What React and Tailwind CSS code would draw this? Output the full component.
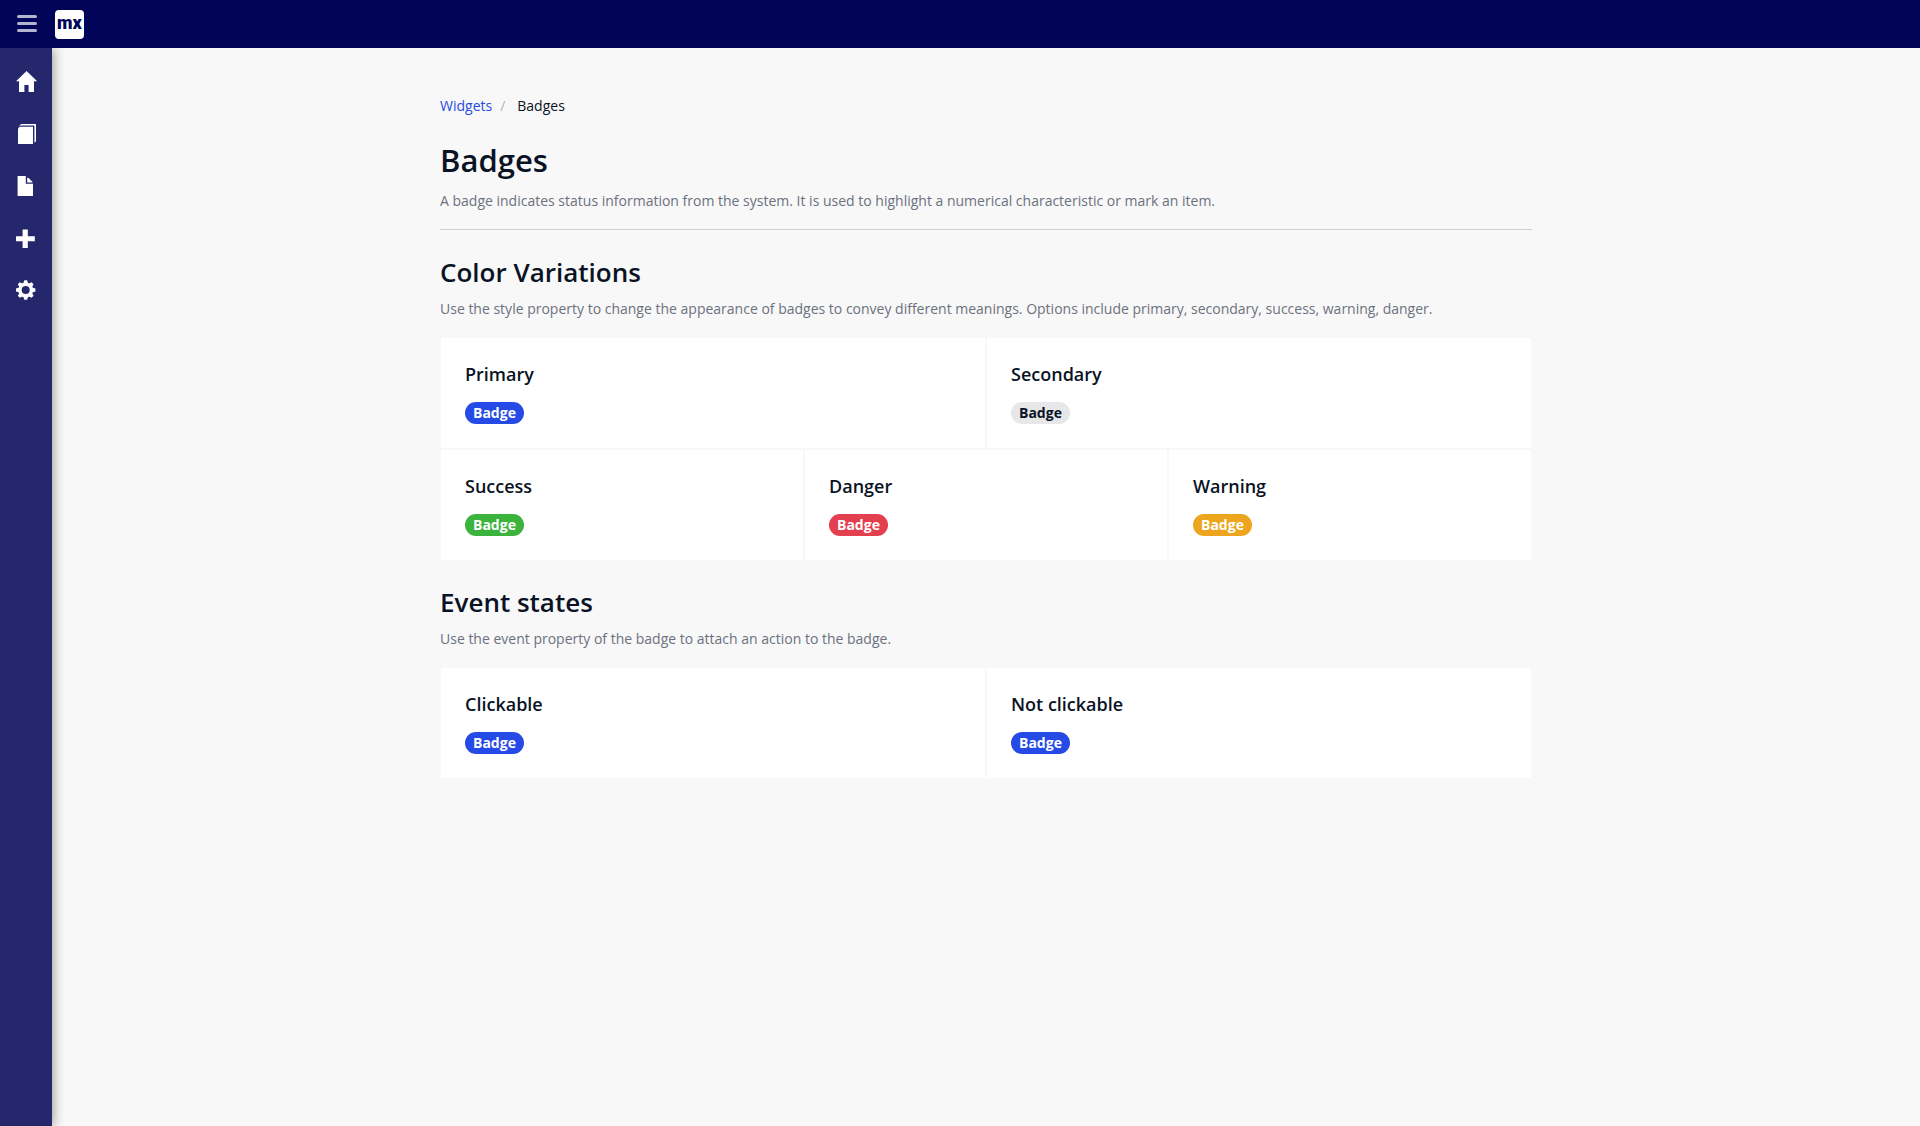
import React from "react";

const fontStack = "font-['Open_Sans','Noto_Sans',sans-serif]";

const HomeIcon = () => (
  <svg viewBox="0 0 24 24" className="size-6" fill="currentColor" aria-hidden="true">
    <path d="M12.6 1 2 11.2h3V22h5.4v-7h4.2v7H20V11.2h3.2z" />
  </svg>
);

const CopyIcon = () => (
  <svg viewBox="0 0 24 24" className="size-6" fill="currentColor" aria-hidden="true">
    <path d="M4 6.4 5.6 4.8H19V22H4z" />
    <path d="M4.8 4.4 7 2h15v17.2l-1.6 1.6V3.6H6.4z" />
  </svg>
);

const FileIcon = () => (
  <svg viewBox="0 0 24 24" className="size-6" fill="currentColor" aria-hidden="true">
    <path d="M3.6 2h8.2v7.8H19V22H3.6z" />
    <path d="M13.2 3.8h1.2l4 4v.8h-5.2z" />
  </svg>
);

const PlusIcon = () => (
  <svg viewBox="0 0 24 24" className="size-6" fill="currentColor" aria-hidden="true">
    <path d="M8.6 3.6h5.2v6.6h7v5h-7V22H8.6v-6.8H2v-5h6.6z" />
  </svg>
);

const CogIcon = () => (
  <svg viewBox="0 0 24 24" className="size-6" aria-hidden="true">
    <g transform="translate(11.7 12)" fill="currentColor">
      <circle r="5.7" fill="none" stroke="currentColor" strokeWidth="3.4" />
      {[0, 45, 90, 135, 180, 225, 270, 315].map((a) => (
        <path key={a} transform={`rotate(${a})`} d="M-2.4-6.4-1.4-9.7h2.8l1 3.3z" />
      ))}
    </g>
  </svg>
);

const navItems = [
  { label: "Home", Icon: HomeIcon },
  { label: "Templates", Icon: CopyIcon },
  { label: "Pages", Icon: FileIcon },
  { label: "Widgets", Icon: PlusIcon },
  { label: "Settings", Icon: CogIcon },
];

const tones = {
  primary: "bg-[#264ae5] text-white",
  secondary: "bg-[#e7e7e9] text-[#0a1325]",
  success: "bg-[#3cb33d] text-white",
  danger: "bg-[#e33f4e] text-white",
  warning: "bg-[#eca51c] text-white",
};

function Badge({ tone = "primary", clickable = false }) {
  const cls = `block w-fit rounded-[11px] px-2 text-sm leading-[22px] font-bold ${tones[tone]}`;
  return clickable ? (
    <button type="button" className={`${cls} cursor-pointer`}>Badge</button>
  ) : (
    <span className={cls}>Badge</span>
  );
}

function Card({ title, tone, clickable }) {
  return (
    <div className="flex-1 border border-[#f8f8f8] bg-white p-6">
      <h3 className="mb-4 text-lg leading-6 font-semibold">{title}</h3>
      <Badge tone={tone} clickable={clickable} />
    </div>
  );
}

function Section({ title, text, children }) {
  return (
    <section>
      <h2 className="text-[26px] leading-9 font-semibold">{title}</h2>
      <p className="mt-[7px] mb-4 text-sm leading-6 text-[#6c717e]">{text}</p>
      {children}
    </section>
  );
}

export default function App() {
  return (
    <div className={`flex min-h-screen flex-col bg-[#f8f8f8] text-[#0a1325] ${fontStack}`}>
      <header className="z-10 flex h-12 items-center gap-[18px] bg-[#020557] pl-[17px]">
        <button type="button" aria-label="Toggle menu" className="flex w-5 flex-col gap-1 pb-0.5">
          <span className="h-[3px] rounded-full bg-[#b3b4cd]" />
          <span className="h-[3px] rounded-full bg-[#b3b4cd]" />
          <span className="h-[3px] rounded-full bg-[#b3b4cd]" />
        </button>
        <a
          href="#home"
          className="flex size-[29px] items-center justify-center rounded bg-white pb-0.5 font-['Roboto',sans-serif] text-lg leading-none font-black text-[#020557]"
        >
          mx
        </a>
      </header>

      <div className="flex flex-1">
        <nav aria-label="Main" className="w-[52px] shrink-0 bg-[#24276c] pt-2 shadow-[2px_0_10px_rgba(0,0,0,0.35)]">
          {navItems.map(({ label, Icon }) => (
            <a key={label} href={`#${label.toLowerCase()}`} aria-label={label} className="flex h-[52px] items-center justify-center text-white">
              <Icon />
            </a>
          ))}
        </nav>

        <main className="flex-1 px-6 pt-12">
          <div className="mx-auto max-w-[1092px]">
            <nav aria-label="Breadcrumb" className="text-sm leading-5">
              <ol className="flex">
                <li><a href="#widgets" className="text-[#264ae5]">Widgets</a></li>
                <li aria-hidden="true" className="pr-3 pl-2 text-[#b0b3ba]">/</li>
                <li aria-current="page">Badges</li>
              </ol>
            </nav>

            <h1 className="mt-6 text-[31px] leading-10 font-semibold">Badges</h1>
            <p className="mt-[9px] text-sm leading-6 text-[#6c717e]">
              A badge indicates status information from the system. It is used to highlight a numerical characteristic or mark an item.
            </p>
            <hr className="mt-4 mb-6 border-[#ced0d3]" />

            <div className="flex flex-col gap-[23px]">
              <Section
                title="Color Variations"
                text="Use the style property to change the appearance of badges to convey different meanings. Options include primary, secondary, success, warning, danger."
              >
                <div className="flex">
                  <Card title="Primary" tone="primary" />
                  <Card title="Secondary" tone="secondary" />
                </div>
                <div className="flex">
                  <Card title="Success" tone="success" />
                  <Card title="Danger" tone="danger" />
                  <Card title="Warning" tone="warning" />
                </div>
              </Section>

              <Section title="Event states" text="Use the event property of the badge to attach an action to the badge.">
                <div className="flex">
                  <Card title="Clickable" tone="primary" clickable />
                  <Card title="Not clickable" tone="primary" />
                </div>
              </Section>
            </div>
          </div>
        </main>
      </div>
    </div>
  );
}
